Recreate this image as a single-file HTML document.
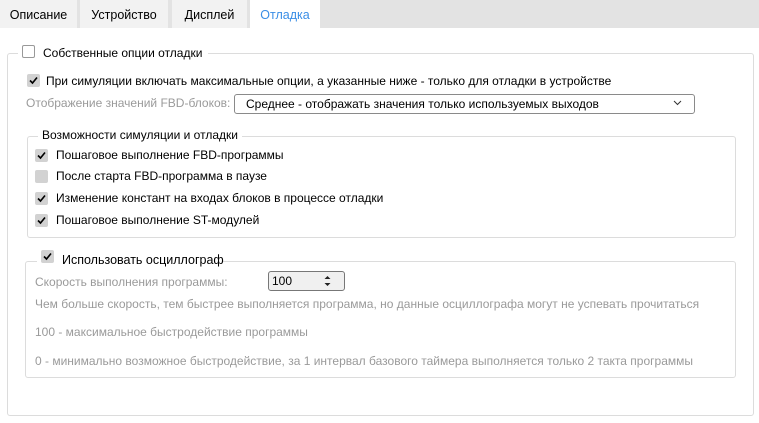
<!DOCTYPE html>
<html><head><meta charset="utf-8"><style>
*{margin:0;padding:0;box-sizing:border-box}
body{width:759px;height:423px;background:#fff;font-family:"Liberation Sans","DejaVu Sans",sans-serif;font-size:12px;color:#000;position:relative;overflow:hidden}
.a{position:absolute;white-space:nowrap;line-height:14px}
.tabbar{position:absolute;left:0;top:0;width:759px;height:28px;background:#e3e3e3}
.tab{position:absolute;top:0;height:28px;background:#f2f2f2;text-align:center;line-height:30px;font-size:12.5px}
.box{position:absolute;border:1px solid #dcdcdc;border-radius:3px}
.cb{position:absolute;width:13px;height:13px;background:#d2d2d2;border-radius:2px}
.cb svg{position:absolute;left:1px;top:1px}
.cbw{position:absolute;width:13px;height:13px;background:#fff;border:1px solid #999;border-radius:2px}
.g{color:#9a9a9a}
.bg{background:#fff;padding:0 4px}
</style></head><body>
<div class="tabbar"></div>
<div class="tab" style="left:0;width:77px">Описание</div>
<div class="tab" style="left:80px;width:88px">Устройство</div>
<div class="tab" style="left:172px;width:75px">Дисплей</div>
<div class="tab" style="left:250px;width:70px;background:#fff;color:#3a8ee6">Отладка</div>

<div class="box" style="left:7px;top:53px;width:747px;height:363px"></div>
<div class="a bg" style="left:18px;top:44px;width:190px;height:16px"></div>
<div class="cbw" style="left:22px;top:45px"></div>
<div class="a" style="left:43px;top:46px">Собственные опции отладки</div>

<div class="cb" style="left:27px;top:74px"><svg width="11" height="11"><path d="M2 5.5L4.5 8L9 2.5" stroke="#000" stroke-width="1.6" fill="none"/></svg></div>
<div class="a" style="left:46px;top:74px">При симуляции включать максимальные опции, а указанные ниже - только для отладки в устройстве</div>
<div class="a g" style="left:26px;top:96px">Отображение значений FBD-блоков:</div>
<div class="box" style="left:234px;top:94px;width:461px;height:20px;border-color:#8a8a8a"></div>
<div class="a" style="left:246px;top:97px">Среднее - отображать значения только используемых выходов</div>
<svg class="a" style="left:673px;top:100px" width="9" height="6"><path d="M1 1L4.5 4.5L8 1" stroke="#333" fill="none"/></svg>

<div class="box" style="left:27px;top:136px;width:709px;height:102px"></div>
<div class="a bg" style="left:38px;top:128px">Возможности симуляции и отладки</div>
<div class="cb" style="left:35px;top:149px"><svg width="11" height="11"><path d="M2 5.5L4.5 8L9 2.5" stroke="#000" stroke-width="1.6" fill="none"/></svg></div>
<div class="a" style="left:56px;top:148px">Пошаговое выполнение FBD-программы</div>
<div class="cb" style="left:35px;top:170px"></div>
<div class="a" style="left:56px;top:169px">После старта FBD-программа в паузе</div>
<div class="cb" style="left:35px;top:192px"><svg width="11" height="11"><path d="M2 5.5L4.5 8L9 2.5" stroke="#000" stroke-width="1.6" fill="none"/></svg></div>
<div class="a" style="left:56px;top:191px">Изменение констант на входах блоков в процессе отладки</div>
<div class="cb" style="left:35px;top:214px"><svg width="11" height="11"><path d="M2 5.5L4.5 8L9 2.5" stroke="#000" stroke-width="1.6" fill="none"/></svg></div>
<div class="a" style="left:56px;top:213px">Пошаговое выполнение ST-модулей</div>

<div class="box" style="left:25px;top:261px;width:711px;height:117px"></div>
<div class="a bg" style="left:37px;top:251px;width:186px;height:16px"></div>
<div class="cb" style="left:41px;top:250px"><svg width="11" height="11"><path d="M2 5.5L4.5 8L9 2.5" stroke="#000" stroke-width="1.6" fill="none"/></svg></div>
<div class="a" style="left:62px;top:253px;font-size:12.5px">Использовать осциллограф</div>
<div class="a g" style="left:35px;top:275px">Скорость выполнения программы:</div>
<div class="box" style="left:268px;top:271px;width:77px;height:20px;border-color:#777;background:#f0f0f0"></div>
<div class="a" style="left:272px;top:274px">100</div>
<svg class="a" style="left:324px;top:274px" width="7" height="14"><path d="M0.5 5L3.5 2L6.5 5Z M0.5 9L3.5 12L6.5 9Z" fill="#222"/></svg>
<div class="a g" style="left:35px;top:297px">Чем больше скорость, тем быстрее выполняется программа, но данные осциллографа могут не успевать прочитаться</div>
<div class="a g" style="left:35px;top:325px">100 - максимальное быстродействие программы</div>
<div class="a g" style="left:35px;top:354px">0 - минимально возможное быстродействие, за 1 интервал базового таймера выполняется только 2 такта программы</div>
</body></html>
